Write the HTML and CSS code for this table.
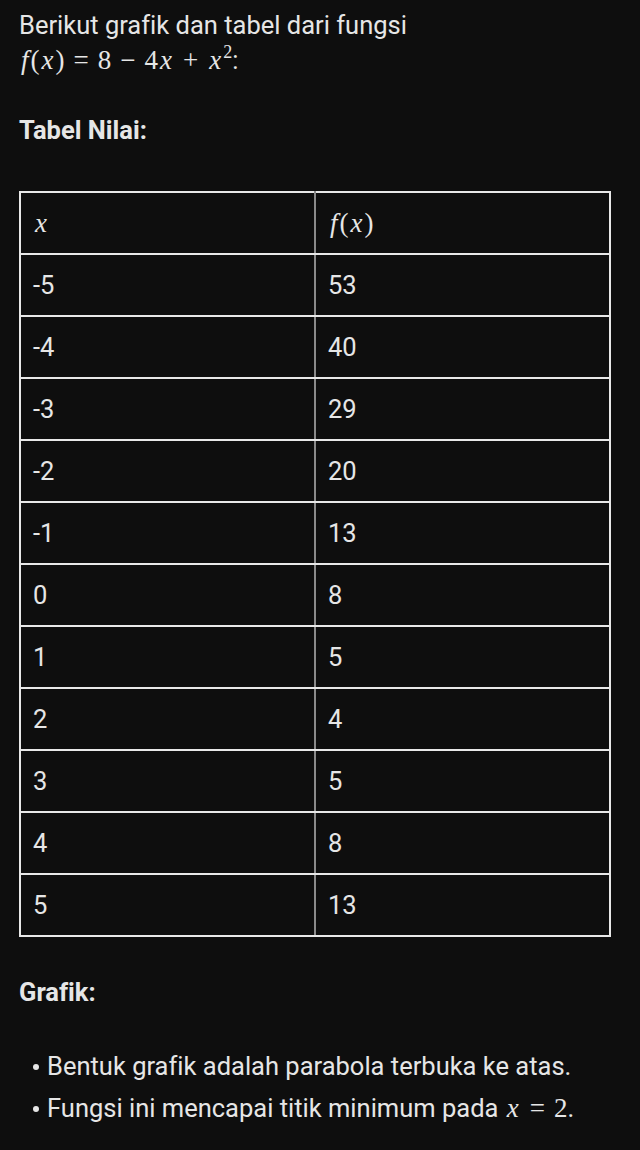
FILE: index.html
```html
<!DOCTYPE html>
<html>
<head>
<meta charset="utf-8">
<link rel="stylesheet" href="styles.css">
</head>
<body>
<div class="page">
  <p class="intro">Berikut grafik dan tabel dari fungsi<br><span class="math"><i>f</i>(<i>x</i>)<span class="op">=</span>8<span class="op">−</span>4<i>x</i><span class="op">+</span><i>x</i><sup>2</sup></span>:</p>
  <h2 class="heading h-table">Tabel Nilai:</h2>
  <table class="values">
    <thead>
      <tr><th><span class="math"><i>x</i></span></th><th><span class="math"><i>f</i>(<i>x</i>)</span></th></tr>
    </thead>
    <tbody>
      <tr><td>-5</td><td>53</td></tr>
      <tr><td>-4</td><td>40</td></tr>
      <tr><td>-3</td><td>29</td></tr>
      <tr><td>-2</td><td>20</td></tr>
      <tr><td>-1</td><td>13</td></tr>
      <tr><td>0</td><td>8</td></tr>
      <tr><td>1</td><td>5</td></tr>
      <tr><td>2</td><td>4</td></tr>
      <tr><td>3</td><td>5</td></tr>
      <tr><td>4</td><td>8</td></tr>
      <tr><td>5</td><td>13</td></tr>
    </tbody>
  </table>
  <h2 class="heading h-graph">Grafik:</h2>
  <ul class="bullets">
    <li>Bentuk grafik adalah parabola terbuka ke atas.</li>
    <li>Fungsi ini mencapai titik minimum pada <span class="math"><i>x</i><span class="op">=</span>2</span>.</li>
  </ul>
</div>
</body>
</html>
```
FILE: styles.css
```css
html, body {
  margin: 0;
  padding: 0;
  background: #0e0e0e;
}
.page {
  padding: 8px 29px 0 19px;
  color: #e6e6e6;
  font-family: Roboto, "Noto Sans", sans-serif;
  font-size: 25.5px;
  font-variant-ligatures: none;
  font-feature-settings: "liga" 0;
}
.intro {
  margin: 0;
  line-height: 35px;
}
.math {
  font-family: "Liberation Serif", "DejaVu Serif", serif;
  font-size: 27px;
}
.math i {
  font-style: italic;
  margin: 0 2px;
}
.math .op {
  margin: 0 9px;
}
.math sup {
  font-size: 18px;
  line-height: 0;
  vertical-align: 11px;
}
.heading {
  margin: 0;
  font-size: 25.5px;
  font-weight: bold;
  line-height: 30px;
}
.h-table {
  margin-top: 37px;
}
.values {
  margin-top: 46px;
  width: 100%;
  border-collapse: collapse;
  border: 2px solid #e8e8e8;
}
.values th, .values td {
  height: 60px;
  padding: 0 12px;
  text-align: left;
  font-weight: normal;
  border-top: 2px solid #e8e8e8;
  border-bottom: 2px solid #e8e8e8;
  vertical-align: middle;
  width: 50%;
}
.values th:first-child, .values td:first-child {
  border-right: 2px solid #8a8a8a;
}
.h-graph {
  margin-top: 40px;
}
.bullets {
  list-style: none;
  margin: 38px 0 0 0;
  padding: 0 0 0 10px;
}
.bullets li {
  line-height: 42px;
  position: relative;
  padding-left: 18px;
}
.bullets li::before {
  content: "";
  position: absolute;
  left: 4px;
  top: 19px;
  width: 6px;
  height: 6px;
  border-radius: 50%;
  background: #e6e6e6;
}
```
